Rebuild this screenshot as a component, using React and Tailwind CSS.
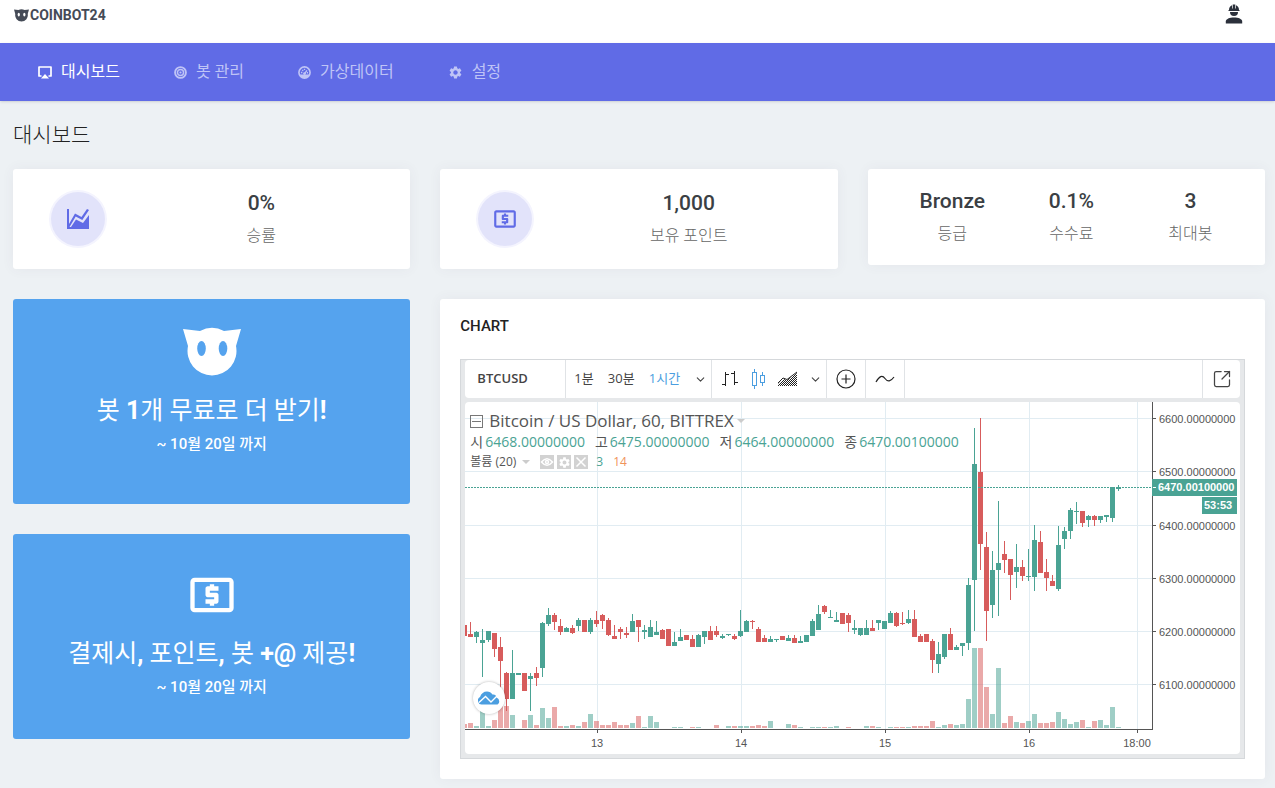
import { ChevronDown, SquareArrowOutUpRight } from "lucide-react";
import { MdLocalAtm, MdSettings } from "react-icons/md";

const UP = "#4aa394";
const DOWN = "#d75c5c";

// direction (1 = up), high, body top, body bottom, low, volume
const CANDLES = [
    [0, 223, 223, 234, 234, 4], [0, 220, 232, 235, 235, 5], [1, 229, 230, 235, 241, 2], [1, 227, 238, 241, 275, 19],
    [1, 229, 229, 238, 240, 2], [0, 231, 231, 247, 255, 8], [0, 235, 245, 259, 295, 22], [0, 270, 271, 297, 309, 22],
    [1, 248, 271, 297, 297, 13], [1, 271, 271, 273, 273, 0], [0, 271, 271, 289, 289, 8], [1, 271, 274, 277, 309, 13],
    [0, 265, 271, 276, 284, 3], [1, 220, 221, 266, 275, 20], [1, 206, 213, 222, 224, 10], [0, 211, 213, 220, 228, 21],
    [0, 217, 224, 230, 233, 2], [1, 225, 226, 230, 230, 2], [0, 223, 226, 231, 232, 3], [1, 216, 218, 224, 229, 2],
    [0, 218, 218, 230, 230, 6], [1, 216, 218, 230, 232, 14], [0, 209, 218, 222, 225, 7], [0, 212, 213, 219, 227, 3],
    [0, 216, 218, 233, 234, 3], [0, 223, 234, 237, 237, 6], [0, 225, 227, 230, 237, 3], [0, 225, 231, 233, 236, 3],
    [1, 212, 219, 230, 230, 5], [0, 218, 218, 225, 240, 12], [1, 223, 228, 230, 237, 1], [1, 218, 225, 235, 235, 12],
    [1, 219, 230, 233, 233, 6], [0, 227, 228, 237, 237, 0], [0, 227, 227, 244, 244, 0], [1, 230, 240, 244, 244, 1],
    [1, 227, 235, 239, 239, 1], [0, 233, 233, 238, 238, 0], [0, 233, 237, 245, 245, 1], [1, 232, 233, 245, 245, 1],
    [1, 229, 229, 235, 242, 0], [0, 224, 229, 238, 238, 0], [0, 224, 229, 233, 235, 3], [1, 232, 234, 236, 237, 0],
    [1, 232, 232, 233, 234, 2], [0, 232, 234, 237, 238, 2], [1, 208, 229, 234, 235, 2], [1, 218, 219, 230, 230, 2],
    [0, 218, 219, 220, 227, 2], [0, 225, 227, 240, 240, 3], [0, 233, 236, 240, 240, 2], [1, 234, 237, 240, 240, 7],
    [1, 237, 237, 238, 240, 0], [0, 234, 234, 238, 238, 0], [1, 233, 236, 239, 239, 4], [0, 233, 236, 241, 241, 3],
    [1, 234, 239, 241, 241, 1], [1, 233, 233, 240, 240, 0], [1, 217, 219, 234, 234, 1], [1, 203, 212, 228, 228, 1],
    [0, 203, 204, 210, 212, 1], [1, 208, 215, 216, 216, 1], [1, 210, 218, 220, 220, 2], [0, 211, 211, 222, 222, 0],
    [0, 211, 213, 221, 230, 1], [1, 218, 226, 228, 232, 0], [1, 226, 226, 233, 234, 0], [1, 218, 226, 233, 233, 2],
    [0, 218, 226, 229, 229, 2], [1, 218, 218, 221, 228, 1], [1, 219, 219, 227, 227, 0], [1, 209, 211, 221, 221, 1],
    [0, 210, 211, 224, 225, 1], [0, 210, 221, 222, 223, 1], [1, 208, 217, 221, 222, 1], [0, 208, 217, 235, 235, 2],
    [0, 232, 234, 240, 240, 2], [0, 232, 232, 240, 240, 2], [0, 237, 239, 258, 271, 7], [1, 240, 252, 262, 271, 1],
    [1, 232, 232, 255, 257, 3], [0, 226, 232, 248, 248, 4], [1, 243, 245, 248, 248, 3], [1, 241, 241, 244, 254, 4],
    [1, 176, 183, 241, 248, 29], [1, 26, 62, 178, 229, 80], [0, 16, 70, 142, 168, 80], [0, 130, 145, 209, 239, 41],
    [1, 149, 168, 203, 216, 14], [1, 99, 161, 168, 214, 60], [0, 139, 152, 158, 171, 5], [0, 157, 157, 173, 198, 12],
    [1, 142, 165, 170, 186, 6], [0, 158, 165, 174, 179, 5], [1, 147, 174, 175, 179, 7], [1, 123, 138, 175, 189, 14],
    [0, 129, 140, 171, 171, 5], [0, 157, 170, 176, 189, 5], [0, 173, 179, 184, 184, 6], [1, 124, 143, 187, 189, 16],
    [1, 125, 129, 137, 147, 9], [1, 106, 108, 129, 137, 4], [1, 100, 109, 110, 122, 6], [0, 109, 109, 121, 125, 8],
    [1, 113, 114, 118, 125, 1], [0, 113, 114, 118, 124, 7], [1, 114, 114, 118, 121, 8], [1, 113, 113, 115, 120, 3],
    [1, 85, 85, 116, 120, 21], [1, 83, 85, 87, 89, 1],
];

const PRICES = [
    ["6600.00000000", 16], ["6500.00000000", 69], ["6400.00000000", 123],
    ["6300.00000000", 176], ["6200.00000000", 229], ["6100.00000000", 282],
];

const TIMES = [["13", 132], ["14", 276], ["15", 420], ["16", 564], ["18:00", 672]];

function Mascot({ className, eyes }) {
    return (
        <svg viewBox="0 0 58 50" className={className} aria-hidden="true">
            <path fill="currentColor" d="M0 2 17 4A24.5 24.5 0 0 1 41 4L58 2 53 19A24.5 24.5 0 1 1 5 19Z" />
            <g className={eyes}>
                <ellipse cx="18.500" cy="21.500" rx="4.300" ry="7.500" />
                <ellipse cx="40" cy="21.500" rx="4.300" ry="7.500" />
            </g>
        </svg>
    );
}

function ScreenIcon({ className }) {
    return (
        <svg viewBox="0 0 14 13" className={className} aria-hidden="true">
            <path fill="none" stroke="currentColor" strokeWidth="1.700" strokeLinejoin="round" d="M3.500 10H1V1H13V10H10.500" />
            <path fill="currentColor" d="M7 8 11 12.500H3Z" />
        </svg>
    );
}

function TargetIcon({ className }) {
    return (
        <svg viewBox="0 0 24 24" className={className} fill="none" stroke="currentColor" aria-hidden="true">
            <circle cx="12" cy="12" r="10" strokeWidth="3.500" />
            <circle cx="12" cy="12" r="5.600" strokeWidth="2.600" />
            <circle cx="12" cy="12" r="2" fill="currentColor" stroke="none" />
        </svg>
    );
}

function GaugeIcon({ className }) {
    return (
        <svg viewBox="0 0 24 24" className={className} fill="none" stroke="currentColor" aria-hidden="true">
            <circle cx="12" cy="12" r="10.300" strokeWidth="3" />
            <path fill="currentColor" stroke="none" d="M3 15.500H21L18 20.500 12 22.500 6 20.500Z" />
            <path strokeWidth="2.500" d="M12 14.500 16.500 8M5.500 12H8M16.500 12.500H18.500M8 7.500 9.500 9M12 5V7.500" />
            <circle cx="12" cy="14" r="2.500" fill="currentColor" stroke="none" />
        </svg>
    );
}

function WorkerIcon({ className }) {
    return (
        <svg viewBox="0 0 18 20" className={className} fill="currentColor" aria-hidden="true">
            <path d="M4 6C4 3.500 5.200 1.900 7 1.200V4.500H7.700V.5H10.300V4.500H11V1.200C12.800 1.900 14 3.500 14 6H14.500V7H3.500V6Z" />
            <path d="M5 8H13A4 4 0 0 1 5 8Z" />
            <path d="M.8 19.500V17.500C.8 15 4.500 13.500 9 13.500S17.200 15 17.200 17.500V19.500Z" />
        </svg>
    );
}

function AreaIcon({ className }) {
    return (
        <svg viewBox="0 0 24 22" className={className} aria-hidden="true">
            <path fill="currentColor" d="M1 1H3V16L9 5.500 15.500 9 21 1 23 2 16.300 12 9.700 8.500 3.500 19H5L10 11.500 17 15 23 7V21H1Z" />
        </svg>
    );
}

function Legend() {
    const ohlc = [
        ["시", "6468.00000000"],
        ["고", "6475.00000000"],
        ["저", "6464.00000000"],
        ["종", "6470.00100000"],
    ];
    return (
        <div className="absolute top-2 left-[5px] font-['Open_Sans','Noto_Sans_CJK_KR',sans-serif] text-[#555]">
            <div className="flex h-[22px] items-center gap-[6px] text-[17px]">
                <button aria-label="접기" className="flex h-[13px] w-[13px] items-center justify-center border border-[#777]">
                    <span className="h-px w-[9px] bg-[#777]" />
                </button>
                <span>Bitcoin / US Dollar, 60, BITTREX</span>
                <span className="-ml-[3px] border-x-4 border-t-4 border-x-transparent border-t-[#ccc]" />
            </div>
            <div className="flex h-5 items-center gap-[10px] text-sm">
                {ohlc.map(([label, value]) => (
                    <span key={label} className="flex gap-[2px]">
                        <span>{label}</span>
                        <span className="text-[#4aa394]">{value}</span>
                    </span>
                ))}
            </div>
            <div className="flex h-5 items-center text-xs">
                <span>볼륨 (20)</span>
                <span className="ml-[6px] border-x-4 border-t-4 border-x-transparent border-t-[#ccc]" />
                <span className="ml-[10px] flex gap-[3px] text-white">
                    <button aria-label="보기" className="h-[14px] w-[14px] bg-[#d2d2d2]">
                        <svg viewBox="0 0 14 14" fill="none" stroke="currentColor" strokeWidth="1.500">
                            <path d="M1.500 7Q7 .5 12.500 7Q7 13.500 1.500 7Z" />
                            <circle cx="7" cy="7" r="1.500" />
                        </svg>
                    </button>
                    <button aria-label="설정" className="flex h-[14px] w-[14px] items-center justify-center bg-[#d2d2d2]">
                        <MdSettings className="h-[13px] w-[13px]" />
                    </button>
                    <button aria-label="삭제" className="h-[14px] w-[14px] bg-[#d2d2d2]">
                        <svg viewBox="0 0 14 14" stroke="currentColor" strokeWidth="1.500">
                            <path d="M2.500 2.500 11.500 11.500M11.500 2.500 2.500 11.500" />
                        </svg>
                    </button>
                </span>
                <span className="ml-2 text-[#4aa394]">3</span>
                <span className="ml-[10px] font-medium text-[#f0935a]">14</span>
            </div>
        </div>
    );
}

function PriceChart() {
    return (
        <div className="relative mt-1 rounded-sm bg-white">
            <svg className="block h-[352px] w-full font-['Liberation_Sans',sans-serif] text-[11px]" shapeRendering="crispEdges">
                <g fill="#e1ecf2">
                    {PRICES.map(([label, y]) => <rect key={label} x="0" y={y} width="687" height="1" />)}
                    {TIMES.map(([label, x]) => <rect key={label} x={x} y="0" width="1" height="327" />)}
                </g>
                {CANDLES.map(([up, high, top, bottom, low, volume], i) => (
                    <g key={i} fill={up ? UP : DOWN}>
                        <rect x={i * 6 - 3} y={326 - volume} width="5" height={volume} opacity="0.53" />
                        <rect x={i * 6 - 1} y={high} width="1" height={low - high} />
                        <rect x={i * 6 - 3} y={top} width="5" height={bottom - top} />
                    </g>
                ))}
                <path d="M0 85.500H687" stroke={UP} strokeDasharray="2 1" />
                <g fill="#555">
                    <rect x="0" y="327" width="688" height="1" />
                    <rect x="687" y="0" width="1" height="328" />
                    {PRICES.map(([label, y]) => (
                        <g key={label}>
                            <rect x="688" y={y} width="3" height="1" />
                            <text x="694" y={y + 5}>{label}</text>
                        </g>
                    ))}
                    {TIMES.map(([label, x]) => (
                        <g key={label}>
                            <rect x={x} y="328" width="1" height="3" />
                            <text x={x} y="345" textAnchor="middle">{label}</text>
                        </g>
                    ))}
                </g>
                <g fill={UP}>
                    <rect x="687" y="77" width="85" height="17" />
                    <rect x="737" y="95" width="35" height="17" />
                </g>
                <g fill="#fff" className="font-bold">
                    <rect x="688" y="85" width="3" height="1" />
                    <text x="693" y="89">6470.00100000</text>
                    <text x="739" y="107">53:53</text>
                </g>
            </svg>
            <Legend />
            <a href="#tradingview" aria-label="TradingView" className="absolute bottom-10 left-2 flex h-8 w-8 items-center justify-center rounded-full bg-white shadow-[0_0_3px_rgba(0,0,0,0.3)]">
                <svg viewBox="0 0 22 14" className="w-[22px]">
                    <path fill="#4b9ee0" d="M3.500 13.500A4 4 0 0 1 2 6Q4 .5 9 .5Q12.500 .5 14.500 3.500Q18 3 18.500 6.500Q22 8 21 12L19.500 13.500Z" />
                    <path fill="none" stroke="#fff" strokeWidth="1.400" d="M1 11.500 7.500 5.500 13 11 19 5" />
                </svg>
            </a>
        </div>
    );
}

function Toolbar() {
    return (
        <div className="flex h-[38px] rounded-sm bg-white font-['Open_Sans','Noto_Sans_CJK_KR',sans-serif] text-[13px] text-[#444]">
            <button className="w-[101px] border-r border-[#e0e3e6] pl-3 text-left font-semibold">BTCUSD</button>
            <div className="flex w-[146px] items-center justify-between border-r border-[#e0e3e6] pr-1 pl-2">
                <button>1분</button>
                <button>30분</button>
                <button className="text-[#4b9ee0]">1시간</button>
                <button aria-label="시간 간격"><ChevronDown size={13} /></button>
            </div>
            <div className="flex w-[115px] items-center justify-between border-r border-[#e0e3e6] pr-1 pl-[9px]">
                <button aria-label="바">
                    <svg className="h-5 w-[18px]" fill="none" stroke="#222" shapeRendering="crispEdges">
                        <path d="M4.500 3V17M1 15.500H4M4.500 5.500H8M13.500 2V16M10 4.500H13M13.500 13.500H17" />
                    </svg>
                </button>
                <button aria-label="캔들">
                    <svg className="h-5 w-4" fill="none" stroke="#4b9ee0" shapeRendering="crispEdges">
                        <path d="M1.500 3.500H5.500V16.500H1.500ZM3.500 0V3M3.500 17V20M9.500 6.500H13.500V13.500H9.500ZM11.500 3V6M11.500 14V17" />
                    </svg>
                </button>
                <button aria-label="영역">
                    <svg className="h-4 w-5">
                        <defs>
                            <pattern id="dots" width="2" height="2" patternUnits="userSpaceOnUse">
                                <path fill="#222" d="M0 0H1V1H0ZM1 1H2V2H1Z" />
                            </pattern>
                        </defs>
                        <path fill="url(#dots)" d="M0 15V13L6 8 9 9 19 2V15Z" />
                        <path fill="none" stroke="#222" d="M0 12 5 7 9 8.500 19 1" />
                    </svg>
                </button>
                <button aria-label="차트 종류"><ChevronDown size={13} /></button>
            </div>
            <button aria-label="비교" className="flex w-[39px] items-center justify-center border-r border-[#e0e3e6]">
                <svg className="h-5 w-5" fill="none" stroke="#222" strokeWidth="1.200">
                    <circle cx="10" cy="10" r="9" />
                    <path d="M5.500 10H14.500M10 5.500V14.500" />
                </svg>
            </button>
            <button aria-label="지표" className="flex w-[39px] items-center justify-center border-r border-[#e0e3e6]">
                <svg className="h-3 w-5" fill="none" stroke="#222" strokeWidth="1.200">
                    <path d="M1 9Q6 0 10 5.500T19 4" />
                </svg>
            </button>
            <button aria-label="새 창" className="ml-auto flex w-[38px] items-center justify-center border-l border-[#e0e3e6]">
                <SquareArrowOutUpRight size={20} strokeWidth={1.5} />
            </button>
        </div>
    );
}

function StatCard({ icon, value, label }) {
    return (
        <section className="flex items-start rounded-[3px] bg-white pt-[19px] pb-5 shadow-[0_0_13px_rgba(82,63,105,0.06)]">
            <div className="w-1/4 pt-1 pl-[38px]">
                <div className="flex h-[54px] w-[54px] items-center justify-center rounded-full bg-[#e2e3fa] text-[#606be6] ring-2 ring-[#f4f4fe]">
                    {icon}
                </div>
            </div>
            <Stat value={value} label={label} />
        </section>
    );
}

function Stat({ value, label }) {
    return (
        <div className="flex-1 text-center">
            <div className="text-[21px] leading-[30px] font-medium text-[#3b3f44]">{value}</div>
            <div className="mt-[5px] text-base leading-[26px] font-light text-[#666]">{label}</div>
        </div>
    );
}

const NAV = [
    { label: "대시보드", icon: <ScreenIcon className="h-[13px] w-[14px]" />, active: true },
    { label: "봇 관리", icon: <TargetIcon className="h-[13px] w-[13px]" /> },
    { label: "가상데이터", icon: <GaugeIcon className="h-[13px] w-[13px]" /> },
    { label: "설정", icon: <MdSettings className="h-[15px] w-[15px]" /> },
];

export default function App() {
    return (
        <div className="min-h-screen bg-[#edf1f4] pb-[9px] font-[Roboto,'Noto_Sans_CJK_KR',sans-serif]">
            <header className="flex h-[43px] items-start justify-between bg-white pr-8 pl-[14px]">
                <a href="#home" className="mt-[5px] flex h-5 items-center gap-[1px] text-[#454b57]">
                    <Mascot className="h-[13px] w-[15px]" eyes="fill-white" />
                    <span className="text-[14px] font-bold">COINBOT24</span>
                </a>
                <button aria-label="내 계정" className="mt-1 text-[#2b303b]">
                    <WorkerIcon className="h-5 w-[18px]" />
                </button>
            </header>
            <nav className="flex h-[58px] items-center gap-[54px] bg-[#606be6] px-[38px] shadow-sm">
                {NAV.map((item) => (
                    <a
                        key={item.label}
                        href="#menu"
                        className={`flex items-center gap-[9px] text-base ${item.active ? "text-white" : "text-[#bfc4f6]"}`}
                    >
                        {item.icon}
                        {item.label}
                    </a>
                ))}
            </nav>

            <main className="pr-[10px] pl-[13px]">
                <h1 className="pt-[19px] pb-[19px] text-[21px] leading-[30px] font-light text-[#222]">대시보드</h1>
                <div className="grid grid-cols-3 items-start gap-[30px]">
                    <StatCard icon={<AreaIcon className="h-[22px] w-6" />} value="0%" label="승률" />
                    <StatCard icon={<MdLocalAtm className="h-[26px] w-[26px]" />} value="1,000" label="보유 포인트" />
                    <section className="flex rounded-[3px] bg-white pt-[17px] pr-[15px] pb-[18px] pl-[25px] shadow-[0_0_13px_rgba(82,63,105,0.06)]">
                        <Stat value="Bronze" label="등급" />
                        <Stat value="0.1%" label="수수료" />
                        <Stat value="3" label="최대봇" />
                    </section>

                    <div className="flex flex-col gap-[30px] text-center text-white">
                        <section className="rounded-[3px] bg-[#55a3ee] pt-7 pb-12">
                            <Mascot className="mx-auto h-[50px] w-[58px]" eyes="fill-[#55a3ee]" />
                            <h2 className="mt-[17px] text-[25px] leading-[34px]">봇 <b>1</b>개 무료로 더 받기<b>!</b></h2>
                            <p className="mt-1 text-[15px] leading-6 font-medium">~ 10월 20일 까지</p>
                        </section>
                        <section className="rounded-[3px] bg-[#55a3ee] pt-[35px] pb-10">
                            <MdLocalAtm className="mx-auto h-[52px] w-[52px]" />
                            <h2 className="mt-4 text-[25px] leading-[34px]">결제시<b>,</b> 포인트<b>,</b> 봇 <b>+@</b> 제공<b>!</b></h2>
                            <p className="mt-1 text-[15px] leading-6 font-medium">~ 10월 20일 까지</p>
                        </section>
                    </div>

                    <section className="col-span-2 rounded-[3px] bg-white px-5 pt-4 pb-5 shadow-[0_0_13px_rgba(82,63,105,0.06)]">
                        <h2 className="mb-[22px] text-[15px] leading-[22px] font-medium text-[#222]">CHART</h2>
                        <div className="border border-[#d5d8db] bg-[#e6e8ea] px-1 pb-1">
                            <Toolbar />
                            <PriceChart />
                        </div>
                    </section>
                </div>
            </main>
        </div>
    );
}
